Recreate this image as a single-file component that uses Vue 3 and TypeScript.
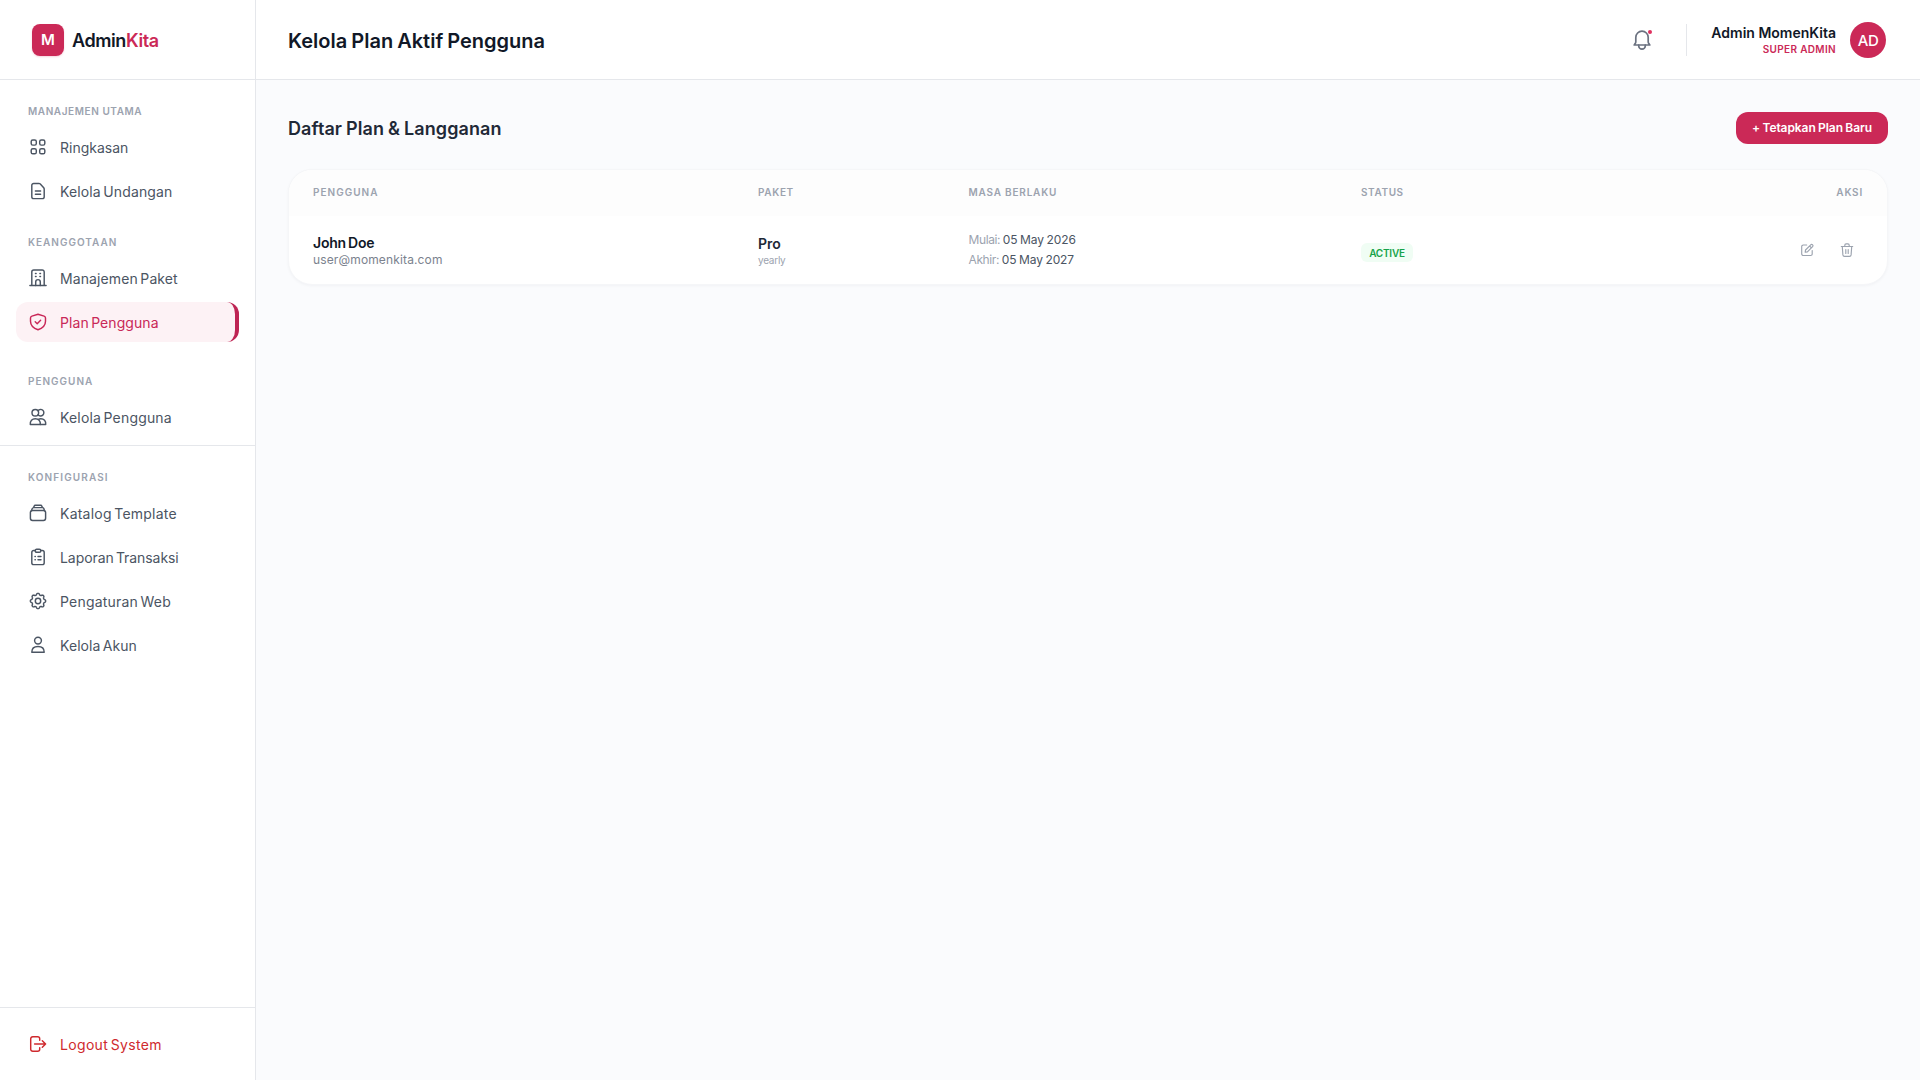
<script setup lang="ts">
interface NavItem {
  label: string
  icon: string
  tracking: number
  active?: boolean
}

interface NavGroup {
  title: string
  tracking: number
  cls: string
  items: NavItem[]
}

// Closed outline of an eight-toothed cog centred in the 20x20 icon box
function cogOutline(): string {
  const points: string[] = []
  for (let i = 0; i < 96; i++) {
    const a = (i / 96) * Math.PI * 2
    const wave = Math.tanh(1.6 * Math.cos(8 * a)) / Math.tanh(1.6)
    const r = 6.9 + 0.75 * wave
    points.push(`${(10 + r * Math.cos(a)).toFixed(2)} ${(10 + r * Math.sin(a)).toFixed(2)}`)
  }
  return `M${points.join('L')}z`
}

const icons: Record<string, string> = {
  grid: '<rect x="3.2" y="3" width="5.1" height="5.1" rx="1.6"/><rect x="11.7" y="3" width="5.1" height="5.1" rx="1.6"/><rect x="3.2" y="11.7" width="5.1" height="5.1" rx="1.6"/><rect x="11.7" y="11.7" width="5.1" height="5.1" rx="1.6"/>',
  doc: '<path d="M10.9 2.4H5.7a1.9 1.9 0 0 0-1.9 1.9v11.4a1.9 1.9 0 0 0 1.9 1.9h8.6a1.9 1.9 0 0 0 1.9-1.9V8.1c0-.5-.2-.9-.5-1.3l-3.4-3.8a1.9 1.9 0 0 0-1.4-.6z"/><path d="M7.4 10h5.2M7.4 13.3h5.2"/>',
  building: '<path d="M1.9 17.5h16.2M3.8 17.5V4a2 2 0 0 1 2-2h8.4a2 2 0 0 1 2 2v13.5"/><path d="M7.7 17.5v-3.6a2.3 2.3 0 0 1 4.6 0v3.6"/><path d="M7.5 5.4h.6M11.9 5.4h.6M7.5 8.5h.6M11.9 8.5h.6"/>',
  shield: '<path d="M10 2.2 3.9 4.1A2 2 0 0 0 2.5 6v3.2c0 4 2.8 6.9 7.5 8.6 4.7-1.7 7.5-4.6 7.5-8.6V6a2 2 0 0 0-1.4-1.9z"/><path d="m7.2 9.8 2 1.9 3.4-3.4"/>',
  users: '<circle cx="7.3" cy="5.7" r="3.3"/><path d="M10 3.6a3.3 3.3 0 1 1 0 4.2"/><path d="M2.3 17.5c-.3-3.7 1.8-5.8 5-5.8s5.3 2.1 5 5.8z"/><path d="M10.3 12.3c.8-.4 1.6-.6 2.5-.6 3.2 0 5.2 2.1 4.9 5.8h-5.4"/>',
  stack: '<rect x="2.4" y="7.4" width="15.2" height="10" rx="2.2"/><path d="m3.5 7.8.7-2.2c.2-.6.7-1 1.4-1h8.8c.7 0 1.2.4 1.4 1l.7 2.2M5.6 4.5l.5-1.3c.2-.5.6-.9 1.2-.9h5.4c.6 0 1 .4 1.2.9l.5 1.3"/>',
  clipboard: '<path d="M7.2 3.5H5.7a1.9 1.9 0 0 0-1.9 1.9v10.3a1.9 1.9 0 0 0 1.9 1.9h8.6a1.9 1.9 0 0 0 1.9-1.9V5.4a1.9 1.9 0 0 0-1.9-1.9h-1.5"/><path d="M7.2 3.7c0-.8.6-1.4 1.4-1.4h2.8c.8 0 1.4.6 1.4 1.4v.2c0 .8-.6 1.3-1.4 1.3H8.6c-.8 0-1.4-.5-1.4-1.3z"/><path d="M7 9.4h.3M10 9.4h3M7 12.8h.3M10 12.8h3"/>',
  gear: `<circle cx="10" cy="10" r="2.7"/><path d="${cogOutline()}"/>`,
  user: '<circle cx="10" cy="5.6" r="3.4"/><path d="M3.8 17.2c0-3.6 2.4-5.7 6.2-5.7s6.2 2.1 6.2 5.7z"/>',
  logout: '<path d="M11.7 6.2V4.8a2 2 0 0 0-2-2H4.7a2 2 0 0 0-2 2v10.4a2 2 0 0 0 2 2h5a2 2 0 0 0 2-2v-1.5"/><path d="M6.6 10h11M14.3 6.7l3.3 3.3-3.3 3.3"/>',
}

const groups: NavGroup[] = [
  {
    title: 'MANAJEMEN UTAMA', tracking: 0.58, cls: 'first',
    items: [
      { label: 'Ringkasan', icon: 'grid', tracking: 0 },
      { label: 'Kelola Undangan', icon: 'doc', tracking: 0.13 },
    ],
  },
  {
    title: 'KEANGGOTAAN', tracking: 1, cls: 'members',
    items: [
      { label: 'Manajemen Paket', icon: 'building', tracking: 0.11 },
      { label: 'Plan Pengguna', icon: 'shield', tracking: 0.07, active: true },
    ],
  },
  {
    title: 'PENGGUNA', tracking: 1, cls: 'people',
    items: [{ label: 'Kelola Pengguna', icon: 'users', tracking: 0.17 }],
  },
  {
    title: 'KONFIGURASI', tracking: 1.12, cls: 'config',
    items: [
      { label: 'Katalog Template', icon: 'stack', tracking: 0.22 },
      { label: 'Laporan Transaksi', icon: 'clipboard', tracking: -0.07 },
      { label: 'Pengaturan Web', icon: 'gear', tracking: 0.2 },
      { label: 'Kelola Akun', icon: 'user', tracking: 0.06 },
    ],
  },
]

const columns = [
  { label: 'PENGGUNA', tracking: 1.03 },
  { label: 'PAKET', tracking: 0.65 },
  { label: 'MASA BERLAKU', tracking: 0.8 },
  { label: 'STATUS', tracking: 0.6 },
  { label: 'AKSI', tracking: 0.8 },
]
</script>

<template>
  <div class="app">
    <aside class="sidebar">
      <div class="brand">
        <div class="logo">M</div>
        <div class="brand-name">Admin<span>Kita</span></div>
      </div>
      <nav class="nav">
        <section v-for="g in groups" :key="g.title" class="group" :class="g.cls">
          <h3 :style="{ letterSpacing: g.tracking + 'px' }">{{ g.title }}</h3>
          <a v-for="i in g.items" :key="i.label" class="item" :class="{ active: i.active }">
            <svg class="icon" viewBox="0 0 20 20" v-html="icons[i.icon]" />
            <span :style="{ letterSpacing: i.tracking + 'px' }">{{ i.label }}</span>
          </a>
        </section>
      </nav>
      <div class="bottom">
        <a class="item logout">
          <svg class="icon" viewBox="0 0 20 20" v-html="icons.logout" />
          <span>Logout System</span>
        </a>
      </div>
    </aside>

    <div class="main">
      <header class="topbar">
        <h1>Kelola Plan Aktif Pengguna</h1>
        <div class="tools">
          <div class="bell">
            <svg viewBox="0 0 24 24">
              <path d="M12 3.2a6.2 6.2 0 0 0-6.2 6.2v4.3c0 .7-.2 1.3-.6 1.9l-1 1.4h15.6l-1-1.4c-.4-.6-.6-1.2-.6-1.9V9.4A6.2 6.2 0 0 0 12 3.2z" />
              <path d="M8.700 17.200v.7a3.300 3.300 0 0 0 6.600 0v-.7" />
            </svg>
            <i class="dot"></i>
          </div>
          <div class="divider"></div>
          <div class="who">
            <strong>Admin MomenKita</strong>
            <small>SUPER ADMIN</small>
          </div>
          <div class="avatar">AD</div>
        </div>
      </header>

      <main class="content">
        <div class="heading">
          <h2>Daftar Plan &amp; Langganan</h2>
          <button class="add">+ Tetapkan Plan Baru</button>
        </div>
        <div class="card">
          <div class="row head">
            <div v-for="c in columns" :key="c.label" :style="{ letterSpacing: c.tracking + 'px' }">{{ c.label }}</div>
          </div>
          <div class="row body">
            <div class="user">
              <strong>John Doe</strong>
              <span>user@momenkita.com</span>
            </div>
            <div class="plan">
              <strong>Pro</strong>
              <span>yearly</span>
            </div>
            <div class="period">
              <p><span>Mulai:</span> 05 May 2026</p>
              <p><span>Akhir:</span> 05 May 2027</p>
            </div>
            <div><span class="badge">ACTIVE</span></div>
            <div class="actions">
              <button aria-label="Edit">
                <svg viewBox="0 0 16 16">
                  <path d="M7.7 3H4.3a1.600 1.600 0 0 0-1.600 1.600v7.300a1.600 1.600 0 0 0 1.600 1.600h7.300a1.600 1.600 0 0 0 1.600-1.600V8.600" />
                  <path d="m6.200 10.200.3-2.200 5.200-5.200a1.300 1.300 0 0 1 1.900 1.900L8.400 9.900zM10.600 4l1.800 1.800" />
                </svg>
              </button>
              <button aria-label="Hapus">
                <svg viewBox="0 0 16 16">
                  <path d="M2.300 4.500h11.400M5.800 4.300V3.200c0-.8.5-1.300 1.300-1.300h1.800c.8 0 1.300.5 1.300 1.300v1.100M3.300 4.700l.6 8.200c.1.900.7 1.500 1.600 1.500h5c.9 0 1.500-.6 1.600-1.500l.6-8.200M6.800 7.500v4M9.200 7.500v4" />
                </svg>
              </button>
            </div>
          </div>
        </div>
      </main>
    </div>
  </div>
</template>

<style>
body {
  background: #fafbfd;
}
</style>

<style scoped>
.app {
  display: flex;
  height: 100vh;
  font-family: Inter, "Liberation Sans", sans-serif;
  color: #111827;
}
.app * {
  box-sizing: border-box;
}
h1,
h2,
h3,
p {
  margin: 0;
}
button {
  border: 0;
  font-family: inherit;
}
svg {
  display: block;
  fill: none;
  stroke: currentColor;
  stroke-linecap: round;
  stroke-linejoin: round;
}

.sidebar {
  width: 256px;
  flex: none;
  display: flex;
  flex-direction: column;
  background: #fff;
  border-right: 1px solid #e5e7eb;
}
.brand {
  height: 80px;
  flex: none;
  display: flex;
  align-items: center;
  gap: 8px;
  padding-left: 32px;
  border-bottom: 1px solid #e5e7eb;
}
.logo {
  width: 32px;
  height: 32px;
  border-radius: 8px;
  background: #cb2957;
  box-shadow: 0 1px 2px rgba(203, 41, 87, 0.2);
  color: #fff;
  font-size: 15px;
  font-weight: 600;
  line-height: 32px;
  text-align: center;
}
.brand-name {
  padding-top: 2px;
  font-size: 18px;
  font-weight: 600;
  letter-spacing: -0.4px;
}
.brand-name span {
  color: #cb2957;
}
.nav {
  flex: 1;
}
.group {
  padding: 0 16px;
}
.group.first {
  padding-top: 23px;
}
.group.members {
  padding-top: 23px;
}
.group.people {
  padding: 31px 16px 8px;
}
.group.config {
  padding-top: 23px;
  border-top: 1px solid #e5e7eb;
}
.group h3 {
  height: 16px;
  margin-bottom: 8px;
  padding-left: 12px;
  font-size: 10px;
  line-height: 16px;
  font-weight: 600;
  color: #9ca3af;
}
.item {
  display: flex;
  align-items: center;
  gap: 12px;
  height: 40px;
  padding-left: 12px;
  border-radius: 12px;
  color: #4b5563;
  font-size: 14px;
}
.item + .item {
  margin-top: 4px;
}
.item span {
  padding-top: 2px;
  line-height: 20px;
  word-spacing: -1.6px;
}
.item.active {
  background: #fdf2f5;
  border-right: 4px solid #be2554;
  color: #c92858;
}
.icon {
  width: 20px;
  height: 20px;
  stroke-width: 1.45;
}
.bottom {
  height: 73px;
  padding: 16px;
  border-top: 1px solid #e5e7eb;
}
.logout {
  color: #cf2a2e;
  letter-spacing: 0.33px;
}

.main {
  flex: 1;
  min-width: 0;
}
.topbar {
  display: flex;
  align-items: center;
  justify-content: space-between;
  height: 80px;
  padding: 0 32px;
  background: #fff;
  border-bottom: 1px solid #e5e7eb;
}
h1 {
  padding-top: 2px;
  font-size: 20px;
  font-weight: 600;
  word-spacing: -1px;
}
.tools {
  display: flex;
  align-items: center;
}
.bell {
  position: relative;
  color: #6b7280;
}
.bell svg {
  width: 24px;
  height: 24px;
  stroke-width: 1.7;
}
.dot {
  position: absolute;
  top: 2px;
  right: 2px;
  width: 4px;
  height: 4px;
  border-radius: 50%;
  background: #e0315f;
}
.divider {
  width: 1px;
  height: 32px;
  margin: 0 24px 0 32px;
  background: #e5e7eb;
}
.who {
  display: flex;
  flex-direction: column;
  align-items: flex-end;
}
.who strong {
  font-size: 14px;
  line-height: 18px;
  font-weight: 600;
}
.who small {
  font-size: 10px;
  line-height: 14px;
  font-weight: 600;
  letter-spacing: 0.35px;
  color: #cb2957;
}
.avatar {
  width: 36px;
  height: 36px;
  margin: 0 2px 0 14px;
  border-radius: 50%;
  background: #cb2957;
  color: #fff;
  font-size: 15px;
  font-weight: 500;
  line-height: 37px;
  letter-spacing: -0.4px;
  text-align: center;
}

.content {
  padding: 32px;
}
.heading {
  display: flex;
  align-items: center;
  justify-content: space-between;
  height: 32px;
  margin-bottom: 25px;
}
h2 {
  font-size: 18px;
  font-weight: 600;
  letter-spacing: 0.08px;
  word-spacing: -0.6px;
  color: #1f2937;
}
.add {
  width: 152px;
  height: 32px;
  padding: 0 0 2px;
  border-radius: 12px;
  background: #cb2957;
  color: #fff;
  font-size: 12px;
  font-weight: 600;
  letter-spacing: -0.08px;
  word-spacing: -0.5px;
}
.card {
  border: 1px solid #f5f6f8;
  border-radius: 24px;
  background: #fff;
  box-shadow: 0 1px 3px rgba(17, 24, 39, 0.04);
  overflow: hidden;
}
.row {
  display: grid;
  grid-template-columns: 445px 210.5px 392.5px 1fr auto;
  padding: 0 24px;
}
.head {
  height: 46px;
  padding-bottom: 2px;
  align-items: center;
  background: #fdfdfd;
  color: #9ca3af;
  font-size: 10px;
  font-weight: 600;
}
.body {
  height: 68px;
  align-items: center;
}
.user,
.plan {
  display: flex;
  flex-direction: column;
}
.plan {
  padding-top: 3px;
}
.user strong,
.plan strong {
  font-size: 14px;
  line-height: 18px;
  font-weight: 600;
}
.user strong {
  letter-spacing: -0.2px;
  word-spacing: -1.2px;
}
.user span {
  font-size: 12px;
  line-height: 15px;
  letter-spacing: 0.14px;
  color: #7b828e;
}
.plan strong {
  color: #1f2937;
}
.plan span {
  font-size: 10px;
  line-height: 15px;
  letter-spacing: -0.25px;
  color: #9ca3af;
}
.period {
  font-size: 12px;
  line-height: 20px;
  letter-spacing: -0.12px;
  word-spacing: -0.6px;
  color: #4b5563;
}
.period span {
  color: #9ca3af;
  letter-spacing: -0.38px;
}
.badge {
  display: block;
  width: 52px;
  height: 19px;
  margin-top: 4px;
  padding-top: 1px;
  border-radius: 6px;
  background: #f0fdf4;
  color: #16a34a;
  font-size: 10px;
  font-weight: 600;
  line-height: 18px;
  letter-spacing: -0.2px;
  text-align: center;
}
.actions {
  display: flex;
  gap: 8px;
}
.actions button {
  padding: 8px;
  background: none;
  color: #9ca3af;
}
.actions svg {
  width: 16px;
  height: 16px;
  stroke-width: 1.15;
}
</style>
